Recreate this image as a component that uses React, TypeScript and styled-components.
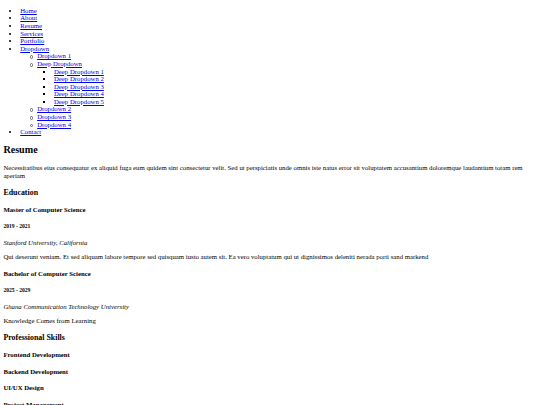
import React from 'react';
import styled, { createGlobalStyle, css } from 'styled-components';

const GlobalStyle = createGlobalStyle`
  body {
    margin: 0;
    background: #fff;
  }
`;

// the reference is a plain 1280px page shown at 540px, so every size is 0.421875 of the default
const Page = styled.div`
  margin: 0 3.375px;
  font-family: 'Liberation Serif', 'Times New Roman', serif;
  font-size: 6.75px;
  line-height: 1.15;
  color: #000;
`;

const NavList = styled.ul<{ $bullet?: 'disc' | 'circle' | 'square'; $nested?: boolean }>`
  list-style-type: ${p => p.$bullet || 'disc'};
  padding-left: 16.875px;
  margin: ${p => (p.$nested ? '0' : '6.75px 0')};
  line-height: 7.59px;

  ${p =>
    p.$bullet === 'circle' &&
    css`
      list-style-type: none;
      & > li {
        position: relative;
      }
      & > li::before {
        content: '';
        position: absolute;
        left: -7.4px;
        top: 3px;
        width: 1.6px;
        height: 1.6px;
        border: 0.5px solid #666;
        border-radius: 50%;
      }
    `}
`;

const NavLink = styled.a`
  color: #0000ee;
  text-decoration: underline;
`;

const Heading2 = styled.h2`
  font-size: 10.125px;
  margin: 8.4px 0;
`;

const Heading3 = styled.h3`
  font-size: 7.9px;
  margin: 7.9px 0;
`;

const Heading4 = styled.h4`
  font-size: 6.75px;
  margin: 8.98px 0;
`;

const Heading5 = styled.h5`
  font-size: 5.6px;
  margin: 9.36px 0;
`;

const Text = styled.p`
  margin: 6.75px 0;
`;

const Item = ({ label, children }: { label: string; children?: React.ReactNode }) => (
  <li>
    <NavLink href="#">{label}</NavLink>
    {children}
  </li>
);

const deep = [1, 2, 3, 4, 5];

export default function App() {
  return (
    <>
      <GlobalStyle />
      <Page>
        <nav>
          <NavList>
            <Item label="Home" />
            <Item label="About" />
            <Item label="Resume" />
            <Item label="Services" />
            <Item label="Portfolio" />
            <Item label="Dropdown">
              <NavList $bullet="circle" $nested>
                <Item label="Dropdown 1" />
                <Item label="Deep Dropdown">
                  <NavList $bullet="square" $nested>
                    {deep.map(n => (
                      <Item key={n} label={`Deep Dropdown ${n}`} />
                    ))}
                  </NavList>
                </Item>
                <Item label="Dropdown 2" />
                <Item label="Dropdown 3" />
                <Item label="Dropdown 4" />
              </NavList>
            </Item>
            <Item label="Contact" />
          </NavList>
        </nav>

        <section>
          <Heading2>Resume</Heading2>
          <Text>
            Necessitatibus eius consequatur ex aliquid fuga eum quidem sint consectetur velit. Sed ut
            perspiciatis unde omnis iste natus error sit voluptatem accusantium doloremque laudantium
            totam rem aperiam
          </Text>

          <Heading3>Education</Heading3>
          <Heading4>Master of Computer Science</Heading4>
          <Heading5>2019 - 2021</Heading5>
          <Text>
            <em>Stanford University, California</em>
          </Text>
          <Text>
            Qui deserunt veniam. Et sed aliquam labore tempore sed quisquam iusto autem sit. Ea vero
            voluptatum qui ut dignissimos deleniti nerada porti sand markend
          </Text>

          <Heading4>Bachelor of Computer Science</Heading4>
          <Heading5>2025 - 2029</Heading5>
          <Text>
            <em>Ghana Communication Technology University</em>
          </Text>
          <Text>Knowledge Comes from Learning</Text>

          <Heading3>Professional Skills</Heading3>
          <Heading4>Frontend Development</Heading4>
          <Heading4>Backend Development</Heading4>
          <Heading4>UI/UX Design</Heading4>
          <Heading4>Project Management</Heading4>
        </section>
      </Page>
    </>
  );
}
